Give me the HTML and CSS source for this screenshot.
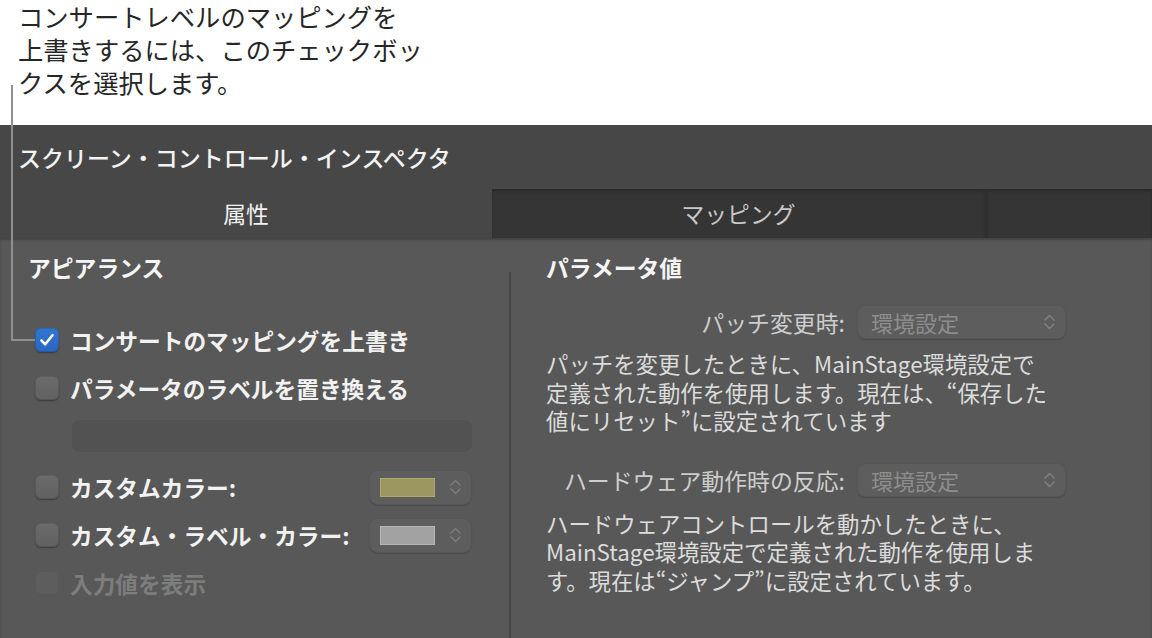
FILE: index.html
```html
<!DOCTYPE html>
<html lang="ja">
<head>
    <meta charset="UTF-8">
    <meta name="viewport" content="width=device-width, initial-scale=1.0">
    <link rel="stylesheet" href="styles.css">
</head>
<body>
    <div class="callout">
        <p class="callout-text">コンサートレベルのマッピングを<br>上書きするには、このチェックボッ<br>クスを選択します。</p>
        <div class="callout-leader"></div>
    </div>

    <div class="inspector">
        <header class="inspector-title">スクリーン・コントロール・インスペクタ</header>
        <nav class="tabs">
            <div class="tab active">属性</div>
            <div class="tab">マッピング</div>
            <div class="tab tab-empty"></div>
        </nav>

        <div class="panel">
            <section class="col col-left">
                <h2 class="section-title">アピアランス</h2>
                <div class="options">
                    <div class="option">
                        <span class="checkbox checked">
                            <svg width="24" height="24" viewBox="0 0 24 24"><path d="M6.5 12.5 L10.2 16.3 L17.5 7.2" fill="none" stroke="#fff" stroke-width="2.6" stroke-linecap="round" stroke-linejoin="round"/></svg>
                        </span>
                        <span class="option-label">コンサートのマッピングを上書き</span>
                    </div>
                    <div class="option">
                        <span class="checkbox"></span>
                        <span class="option-label">パラメータのラベルを置き換える</span>
                    </div>
                    <div class="text-field"></div>
                    <div class="option">
                        <span class="checkbox"></span>
                        <span class="option-label">カスタムカラー:</span>
                        <div class="color-well">
                            <span class="swatch swatch-olive"></span>
                            <svg class="stepper" width="13" height="20" viewBox="0 0 13 20"><path d="M2 8 L6.5 3.5 L11 8 M2 12 L6.5 16.5 L11 12" fill="none" stroke="#797979" stroke-width="1.7" stroke-linecap="round" stroke-linejoin="round"/></svg>
                        </div>
                    </div>
                    <div class="option">
                        <span class="checkbox"></span>
                        <span class="option-label">カスタム・ラベル・カラー:</span>
                        <div class="color-well">
                            <span class="swatch swatch-grey"></span>
                            <svg class="stepper" width="13" height="20" viewBox="0 0 13 20"><path d="M2 8 L6.5 3.5 L11 8 M2 12 L6.5 16.5 L11 12" fill="none" stroke="#797979" stroke-width="1.7" stroke-linecap="round" stroke-linejoin="round"/></svg>
                        </div>
                    </div>
                    <div class="option disabled">
                        <span class="checkbox"></span>
                        <span class="option-label">入力値を表示</span>
                    </div>
                </div>
            </section>

            <div class="divider"></div>

            <section class="col col-right">
                <h2 class="section-title">パラメータ値</h2>

                <div class="field-row">
                    <span class="field-label">パッチ変更時:</span>
                    <div class="popup">
                        <span>環境設定</span>
                        <svg width="13" height="20" viewBox="0 0 13 20"><path d="M2 8 L6.5 3.5 L11 8 M2 12 L6.5 16.5 L11 12" fill="none" stroke="#7e7e7e" stroke-width="1.7" stroke-linecap="round" stroke-linejoin="round"/></svg>
                    </div>
                </div>
                <p class="note">パッチを変更したときに、MainStage環境設定で<br>定義された動作を使用します。現在は、“保存した<br>値にリセット”に設定されています</p>

                <div class="field-row second">
                    <span class="field-label">ハードウェア動作時の反応:</span>
                    <div class="popup">
                        <span>環境設定</span>
                        <svg width="13" height="20" viewBox="0 0 13 20"><path d="M2 8 L6.5 3.5 L11 8 M2 12 L6.5 16.5 L11 12" fill="none" stroke="#7e7e7e" stroke-width="1.7" stroke-linecap="round" stroke-linejoin="round"/></svg>
                    </div>
                </div>
                <p class="note second">ハードウェアコントロールを動かしたときに、<br>MainStage環境設定で定義された動作を使用しま<br>す。現在は“ジャンプ”に設定されています。</p>
            </section>
        </div>
    </div>
</body>
</html>
```

FILE: styles.css
```css
* {
   box-sizing: border-box;
}
body {
   margin: 0;
   width: 1152px;
   height: 638px;
   overflow: hidden;
   background: #fff;
   font-family: "Noto Sans CJK JP", "Noto Sans", sans-serif;
}

/* note above the inspector */
.callout {
   height: 125px;
   padding-left: 18px;
}
.callout-text {
   margin: 0;
   font-size: 25.3px;
   line-height: 33px;
   color: #262626;
}
.callout-leader {
   position: absolute; /* runs over the inspector down to the checkbox */
   left: 11px;
   top: 85px;
   width: 24px;
   height: 256px;
   border-left: 2px solid #8f8f8f;
   border-bottom: 2px solid #8f8f8f;
   z-index: 2;
}

.inspector-title {
   height: 64px;
   background: #474747;
   padding: 17px 0 0 18px;
   font-size: 23px;
   line-height: 30px;
   font-weight: 500;
   color: #f3f3f3;
}
.tabs {
   display: grid;
   grid-template-columns: 492px 493px 1fr;
   height: 49px;
}
.tab {
   background: #353535;
   box-shadow: inset 0 2px 3px rgba(0, 0, 0, 0.25);
   text-align: center;
   font-size: 22.8px;
   line-height: 49px;
   color: #c9c9c9;
}
.tab.active {
   background: #474747;
   box-shadow: none;
   color: #f2f2f2;
}
.tab-empty {
   border-left: 2px solid #2e2e2e;
}

.panel {
   display: grid;
   grid-template-columns: 509px 2px 1fr;
   height: 400px;
   background: #585858;
   box-shadow: inset 0 2px 2px rgba(0, 0, 0, 0.22);
}
.divider {
   margin-top: 34px;
   background: #474747;
}
.col {
   padding-top: 16px;
}
.col-left {
   padding-left: 28px;
}
.col-right {
   padding-left: 35px;
}
.section-title {
   margin: 0;
   font-size: 22.8px;
   line-height: 28px;
   font-weight: 700;
   color: #f5f5f5;
}

/* checkbox list */
.options {
   margin: 34px 0 0 7px;
   width: 437px;
}
.option {
   display: flex;
   align-items: center;
   height: 48px;
   gap: 11px;
}
.checkbox {
   width: 24px;
   height: 24px;
   flex: none;
   border-radius: 6px;
   background: linear-gradient(#6b6b6b, #616161);
   box-shadow: 0 1px 1.5px rgba(0, 0, 0, 0.35), inset 0 0 0 1px rgba(0, 0, 0, 0.12);
}
.checkbox.checked {
   background: linear-gradient(#3276d2, #2966c0);
}
.checkbox svg {
   display: block;
}
.option-label {
   font-size: 22.7px;
   font-weight: 700;
   color: #f2f2f2;
   white-space: nowrap;
}
.option.disabled .checkbox {
   background: #5d5d5d;
   box-shadow: inset 0 0 0 1px rgba(0, 0, 0, 0.06);
}
.option.disabled .option-label {
   color: #7d7d7d;
}
.text-field {
   margin: 8px 0 11px 37px;
   width: 400px;
   height: 32px;
   border-radius: 8px;
   background: #525252;
}
.color-well {
   margin-left: auto;
   display: flex;
   align-items: center;
   gap: 14px;
   width: 103px;
   height: 35px;
   padding-left: 10px;
   border-radius: 9px;
   background: #5d5d5d;
   border: 1px solid rgba(0, 0, 0, 0.08);
   box-shadow: 0 1px 1px rgba(0, 0, 0, 0.15);
}
.swatch {
   width: 55px;
   height: 19px;
}
.swatch-olive {
   background: #9c9661;
   border: 1px solid #aea86c;
}
.swatch-grey {
   background: #a2a2a2;
   border: 1px solid #b6b6b6;
}

/* parameter value side */
.field-row {
   display: flex;
   justify-content: flex-end;
   align-items: center;
   gap: 12px;
   width: 520px;
   margin-top: 23px;
}
.field-row.second {
   margin-top: 28px;
}
.field-label {
   font-size: 22.9px;
   color: #cdcdcd;
   white-space: nowrap;
}
.popup {
   display: flex;
   align-items: center;
   justify-content: space-between;
   width: 209px;
   height: 34px;
   padding: 0 9px 0 13px;
   border-radius: 8px;
   background: #5d5d5d;
   border: 1px solid rgba(0, 0, 0, 0.08);
   box-shadow: 0 1px 1px rgba(0, 0, 0, 0.15);
   font-size: 22px;
   color: #8d8d8d;
}
.note {
   margin: 10px 0 0;
   font-size: 22.4px;
   line-height: 28.5px;
   color: #dcdcdc;
   white-space: nowrap;
}
.note.second {
   margin-top: 12px;
}
```
